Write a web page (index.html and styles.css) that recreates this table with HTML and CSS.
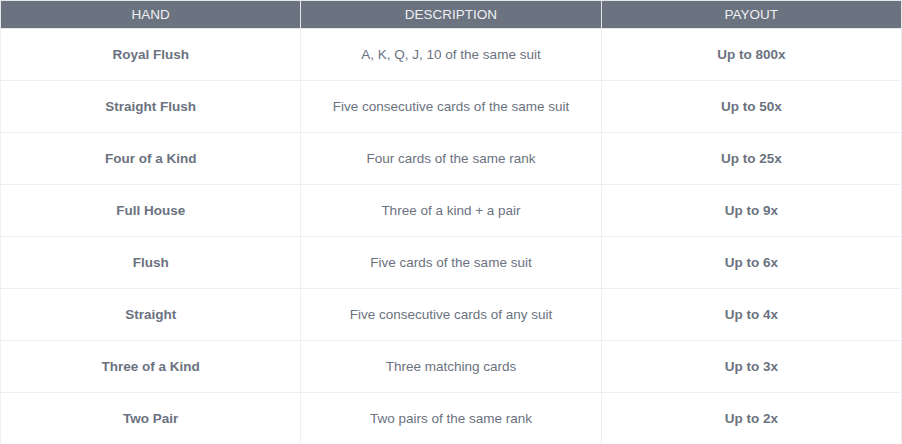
FILE: index.html
```html
<!DOCTYPE html>
<html>
<head>
<meta charset="utf-8">
<link rel="stylesheet" href="styles.css">
</head>
<body>
<table class="pay-table">
  <thead>
    <tr><th>HAND</th><th>DESCRIPTION</th><th>PAYOUT</th></tr>
  </thead>
  <tbody>
    <tr><td class="hand">Royal Flush</td><td class="desc">A, K, Q, J, 10 of the same suit</td><td class="pay">Up to 800x</td></tr>
    <tr><td class="hand">Straight Flush</td><td class="desc">Five consecutive cards of the same suit</td><td class="pay">Up to 50x</td></tr>
    <tr><td class="hand">Four of a Kind</td><td class="desc">Four cards of the same rank</td><td class="pay">Up to 25x</td></tr>
    <tr><td class="hand">Full House</td><td class="desc">Three of a kind + a pair</td><td class="pay">Up to 9x</td></tr>
    <tr><td class="hand">Flush</td><td class="desc">Five cards of the same suit</td><td class="pay">Up to 6x</td></tr>
    <tr><td class="hand">Straight</td><td class="desc">Five consecutive cards of any suit</td><td class="pay">Up to 4x</td></tr>
    <tr><td class="hand">Three of a Kind</td><td class="desc">Three matching cards</td><td class="pay">Up to 3x</td></tr>
    <tr><td class="hand">Two Pair</td><td class="desc">Two pairs of the same rank</td><td class="pay">Up to 2x</td></tr>
  </tbody>
</table>
</body>
</html>
```
FILE: styles.css
```css
html, body {
  margin: 0;
  padding: 0;
  background: #ffffff;
}
.pay-table {
  width: 902px;
  border-collapse: collapse;
  table-layout: fixed;
  font-family: "Liberation Sans", Arial, sans-serif;
  font-size: 13.5px;
  color: #6b7280;
}
.pay-table th {
  background: #6b7280;
  color: #eef0f3;
  font-weight: 400;
  height: 28px;
  padding: 0;
  text-align: center;
  border: 1px solid #e5e7eb;
  box-sizing: border-box;
}
.pay-table td {
  height: 52px;
  padding: 0;
  text-align: center;
  border: 1px solid #eeeff2;
  box-sizing: border-box;
}
.pay-table .hand,
.pay-table .pay {
  font-weight: 700;
}
```
